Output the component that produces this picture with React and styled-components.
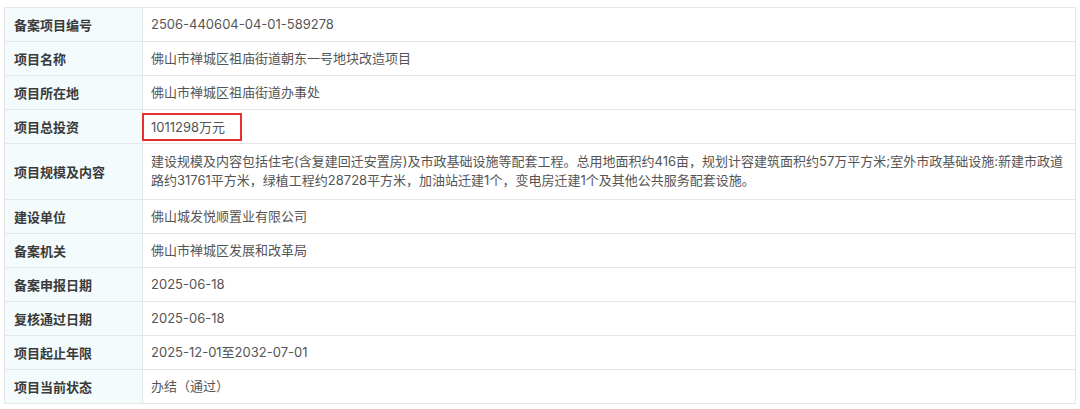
import React from "react";
import styled, { createGlobalStyle } from "styled-components";

const Global = createGlobalStyle`
  html, body { margin: 0; padding: 0; background: #fff; }
  body { font-family: "Inter", "Noto Sans CJK SC", "Noto Sans", sans-serif; }
`;

const Page = styled.div`
  padding: 7px 5px 0 4px;
`;

const Table = styled.table`
  width: 1072px;
  border-collapse: collapse;
  table-layout: fixed;
  border: 1px solid #e3e3e3;
`;

const Row = styled.tr``;

const Label = styled.th`
  width: 138px;
  box-sizing: border-box;
  height: 34px;
  padding: 0 0 0 9px;
  background: #f4fbfd;
  border: 1px solid #e6e6e6;
  text-align: left;
  font-family: "Noto Sans CJK SC", sans-serif;
  font-weight: 700;
  font-size: 13px;
  color: #3a3a3a;
  vertical-align: middle;
`;

const Value = styled.td`
  height: 34px;
  box-sizing: border-box;
  padding: ${(p) => (p.$tall ? "8px 2px 9px 8px" : "0 8px")};
  border: 1px solid #e6e6e6;
  font-size: 13px;
  line-height: 19px;
  color: #555;
  vertical-align: middle;
  background: #fff;
`;

const Highlight = styled.span`
  display: inline-block;
  margin-left: -8px;
  padding: 4px 16px 4px 8px;
  line-height: 18px;
  outline: 2px solid #e4312f;
  outline-offset: -1px;
`;

const rows = [
  ["备案项目编号", "2506-440604-04-01-589278"],
  ["项目名称", "佛山市禅城区祖庙街道朝东一号地块改造项目"],
  ["项目所在地", "佛山市禅城区祖庙街道办事处"],
  ["项目总投资", "1011298万元", "hl"],
  [
    "项目规模及内容",
    "建设规模及内容包括住宅(含复建回迁安置房)及市政基础设施等配套工程。总用地面积约416亩，规划计容建筑面积约57万平方米;室外市政基础设施:新建市政道路约31761平方米，绿植工程约28728平方米，加油站迁建1个，变电房迁建1个及其他公共服务配套设施。",
    "tall",
  ],
  ["建设单位", "佛山城发悦顺置业有限公司"],
  ["备案机关", "佛山市禅城区发展和改革局"],
  ["备案申报日期", "2025-06-18"],
  ["复核通过日期", "2025-06-18"],
  ["项目起止年限", "2025-12-01至2032-07-01"],
  ["项目当前状态", "办结（通过）"],
];

export default function App() {
  return (
    <>
      <Global />
      <Page>
        <Table>
          <tbody>
            {rows.map(([k, v, kind]) => (
              <Row key={k}>
                <Label>{k}</Label>
                <Value $tall={kind === "tall"}>
                  {kind === "hl" ? <Highlight>{v}</Highlight> : v}
                </Value>
              </Row>
            ))}
          </tbody>
        </Table>
      </Page>
    </>
  );
}
